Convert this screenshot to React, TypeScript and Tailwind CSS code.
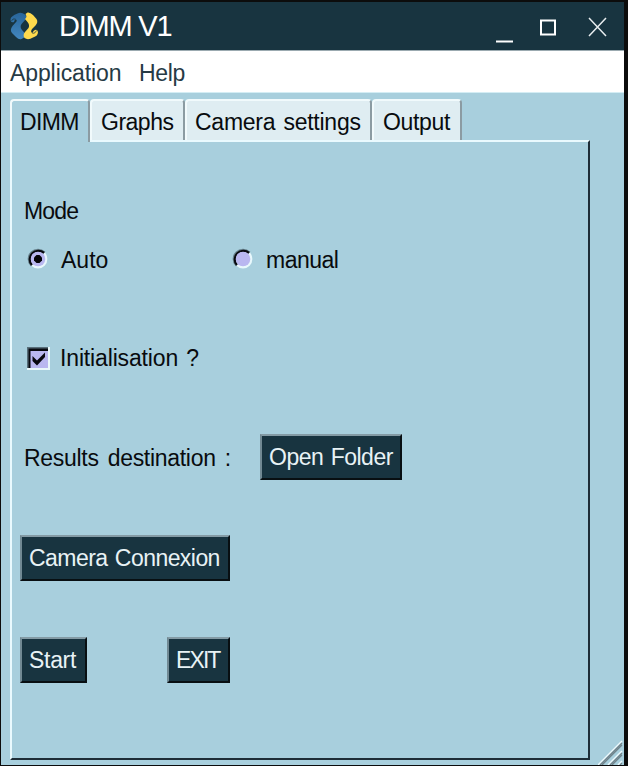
import React from "react";

function Tab({ label, className, active = false }: { label: string; className: string; active?: boolean }) {
  return (
    <div
      className={`relative flex shrink-0 rounded-t-[4px] border-t-2 border-r-2 border-l-2 border-t-[#f1fafc] border-r-[#8b9ba2] border-l-[#f1fafc] pt-[8px] leading-[26px] whitespace-nowrap ${
        active ? "z-10 h-[43px] bg-[#a8cfdd]" : "h-[41px] bg-[#dfedf2]"
      } ${className}`}
    >
      {label}
    </div>
  );
}

function PanelButton({ label, className }: { label: string; className: string }) {
  return (
    <button
      className={`block h-[46px] shrink-0 border-2 border-t-[#849ba5] border-r-[#080f12] border-b-[#080f12] border-l-[#718993] bg-[#183440] pl-[7px] text-left leading-[43px] whitespace-nowrap text-[#e8f2f5] ${className}`}
    >
      {label}
    </button>
  );
}

function Radio({ checked = false }: { checked?: boolean }) {
  return (
    <svg width="22" height="22" viewBox="0 0 22 22" className="block shrink-0">
      <circle cx="11" cy="11" r="9.4" fill="#e8f8fc" />
      <path d="M4.2 17.8A9.6 9.6 0 0 1 17.8 4.2" fill="none" stroke="#68828d" strokeWidth="1.5" />
      <path d="M5 17A8.5 8.5 0 0 1 17 5" fill="none" stroke="#080b10" strokeWidth="2.4" />
      <circle cx="11" cy="11" r="7.3" fill="#b9b7f0" />
      {checked && <path d="M9.5 7h3L15 9.5v3L12.500 15h-3L7 12.500v-3z" fill="#050509" />}
    </svg>
  );
}

function Checkbox() {
  return (
    <svg width="23" height="23" viewBox="0 0 23 23" className="block shrink-0">
      <path d="M0 0h23v23H0z" fill="#e9f8fb" />
      <path d="M0 0h21v2H2v19H0z" fill="#586f7a" />
      <path d="M1.500 1.500h19.500V21H1.500z" fill="#080a10" />
      <path d="M3.500 4h17.500v17H3.500z" fill="#b9b7f0" />
      <path d="M5.500 9v5l4.500 4.500 8-8.500V5.500l-8 8z" fill="#080810" />
    </svg>
  );
}

function Logo() {
  return (
    <svg width="30" height="30" viewBox="0 0 30 30" className="block shrink-0">
      <defs>
        <linearGradient id="blue" x1="0" y1="0" x2="0" y2="1">
          <stop stopColor="#28659a" />
          <stop offset="1" stopColor="#4387bf" />
        </linearGradient>
      </defs>
      <path
        d="M8.500 2.500Q12 .5 16 3.500Q18.500 6 16.500 8.500L12.500 13Q10.500 16 13 19L16.500 23Q17 26 12.500 28Q10 29 7 26L3 22Q.5 19 3.500 15L7.500 10.500Q8.500 8 6 8.500L5 11Q1.500 12 1.500 8Q2 5 8.500 2.500Z"
        fill="url(#blue)"
      />
      <path
        d="M18.500 1.500Q21 1 24 4L27.500 8Q29.500 11 26.500 14.500L23 18Q21 21 23.500 22L24.500 20Q28 17 29 21Q29 25 24 26.500Q19 29.500 15.500 27Q13.500 24 16 21L19.500 17Q21 14 18.500 11L16 8Q18.500 6 16.500 3Z"
        fill="#ffda4d"
      />
      <path d="M2.500 10q1-3 4-2M23.500 22.500q3 0 4-3" stroke="#183440" strokeWidth=".7" fill="none" />
    </svg>
  );
}

export default function App() {
  return (
    <div className="flex h-[766px] w-[628px] flex-col overflow-hidden border-t-2 border-r-4 border-b border-l border-[#0c0c0c] bg-[#a8cfdd] font-['Liberation_Sans',Arial,sans-serif] text-[23px] text-[#080b0e]">
      <header className="flex h-[49px] shrink-0 items-center border-b border-[#9baab0] bg-[#183440] pl-[8px] text-white">
        <Logo />
        <span className="ml-[20px] text-[29px] leading-[50px] tracking-[-1.200px]">DIMM V1</span>
        <svg width="128" height="48" className="ml-auto block">
          <path d="M0 39.500h17" stroke="#fff" strokeWidth="2" />
          <path d="M45 18.500h14v14H45z" fill="none" stroke="#fff" strokeWidth="2" />
          <path d="m93 16 17 18m0-18L93 34" fill="none" stroke="#e8edef" strokeWidth="1.500" />
        </svg>
      </header>
      <nav className="flex h-[42px] shrink-0 gap-[17px] border-b border-[#d4edf4] bg-white pt-[9px] pl-[9px] leading-[26px] tracking-[-0.100px] text-[#263a45]">
        <span className="w-[112px] whitespace-nowrap">Application</span>
        <span className="tracking-[-0.300px]">Help</span>
      </nav>
      <main className="flex grow flex-col pt-[6px] pl-[9px]">
        <div className="-mb-[2px] flex h-[43px] shrink-0 items-start">
          <Tab label="DIMM" active className="w-[80px] pl-[8px] tracking-[-0.600px]" />
          <Tab label="Graphs" className="w-[95px] pl-[9px] tracking-[-0.500px]" />
          <Tab label="Camera settings" className="w-[187px] pl-[8px] tracking-[-0.250px] [word-spacing:2px]" />
          <Tab label="Output" className="w-[90px] pl-[9px] tracking-[-0.350px]" />
        </div>
        <section className="h-[620px] w-[580px] border-2 border-t-[#eafafe] border-r-[#1e2d37] border-b-[#1e2d37] border-l-[#eafafe] pt-[55px] pl-[8px]">
          <div className="h-[51px] pl-[4px] leading-[29px] tracking-[-0.800px]">Mode</div>
          <div className="flex h-[99px] items-start pl-[7px] leading-[25px]">
            <Radio checked />
            <span className="ml-[12px] w-[171px]">Auto</span>
            <Radio />
            <span className="ml-[12px] tracking-[-0.500px]">manual</span>
          </div>
          <div className="flex h-[87px] items-start pl-[7px] leading-[23px]">
            <Checkbox />
            <span className="ml-[10px] tracking-[-0.150px] [word-spacing:2px]">Initialisation ?</span>
          </div>
          <div className="flex h-[101px] items-start">
            <span className="w-[240px] pl-[4px] leading-[48px] tracking-[-0.300px] [word-spacing:3px]">
              Results destination :
            </span>
            <PanelButton label="Open Folder" className="w-[142px] tracking-[-0.500px] [word-spacing:1.500px]" />
          </div>
          <div className="flex h-[102px] items-start">
            <PanelButton label="Camera Connexion" className="w-[210px] tracking-[-0.550px] [word-spacing:1.500px]" />
          </div>
          <div className="flex gap-[80px]">
            <PanelButton label="Start" className="w-[67px] tracking-[-0.300px]" />
            <PanelButton label="EXIT" className="w-[63px] tracking-[-1.900px]" />
          </div>
        </section>
        <svg width="26" height="25" viewBox="0 0 26 25" className="absolute top-[740px] left-[598px]">
          <path d="M0 25 24 1M10 25 24 11M20 25l4-4" fill="none" stroke="#edf9fc" strokeWidth="1.500" />
          <path d="M2 25 24 3M4 25 24 5M12 25l12-12M14 25l10-10M22 25l2-2" fill="none" stroke="#70838b" strokeWidth="1.300" />
        </svg>
      </main>
    </div>
  );
}
